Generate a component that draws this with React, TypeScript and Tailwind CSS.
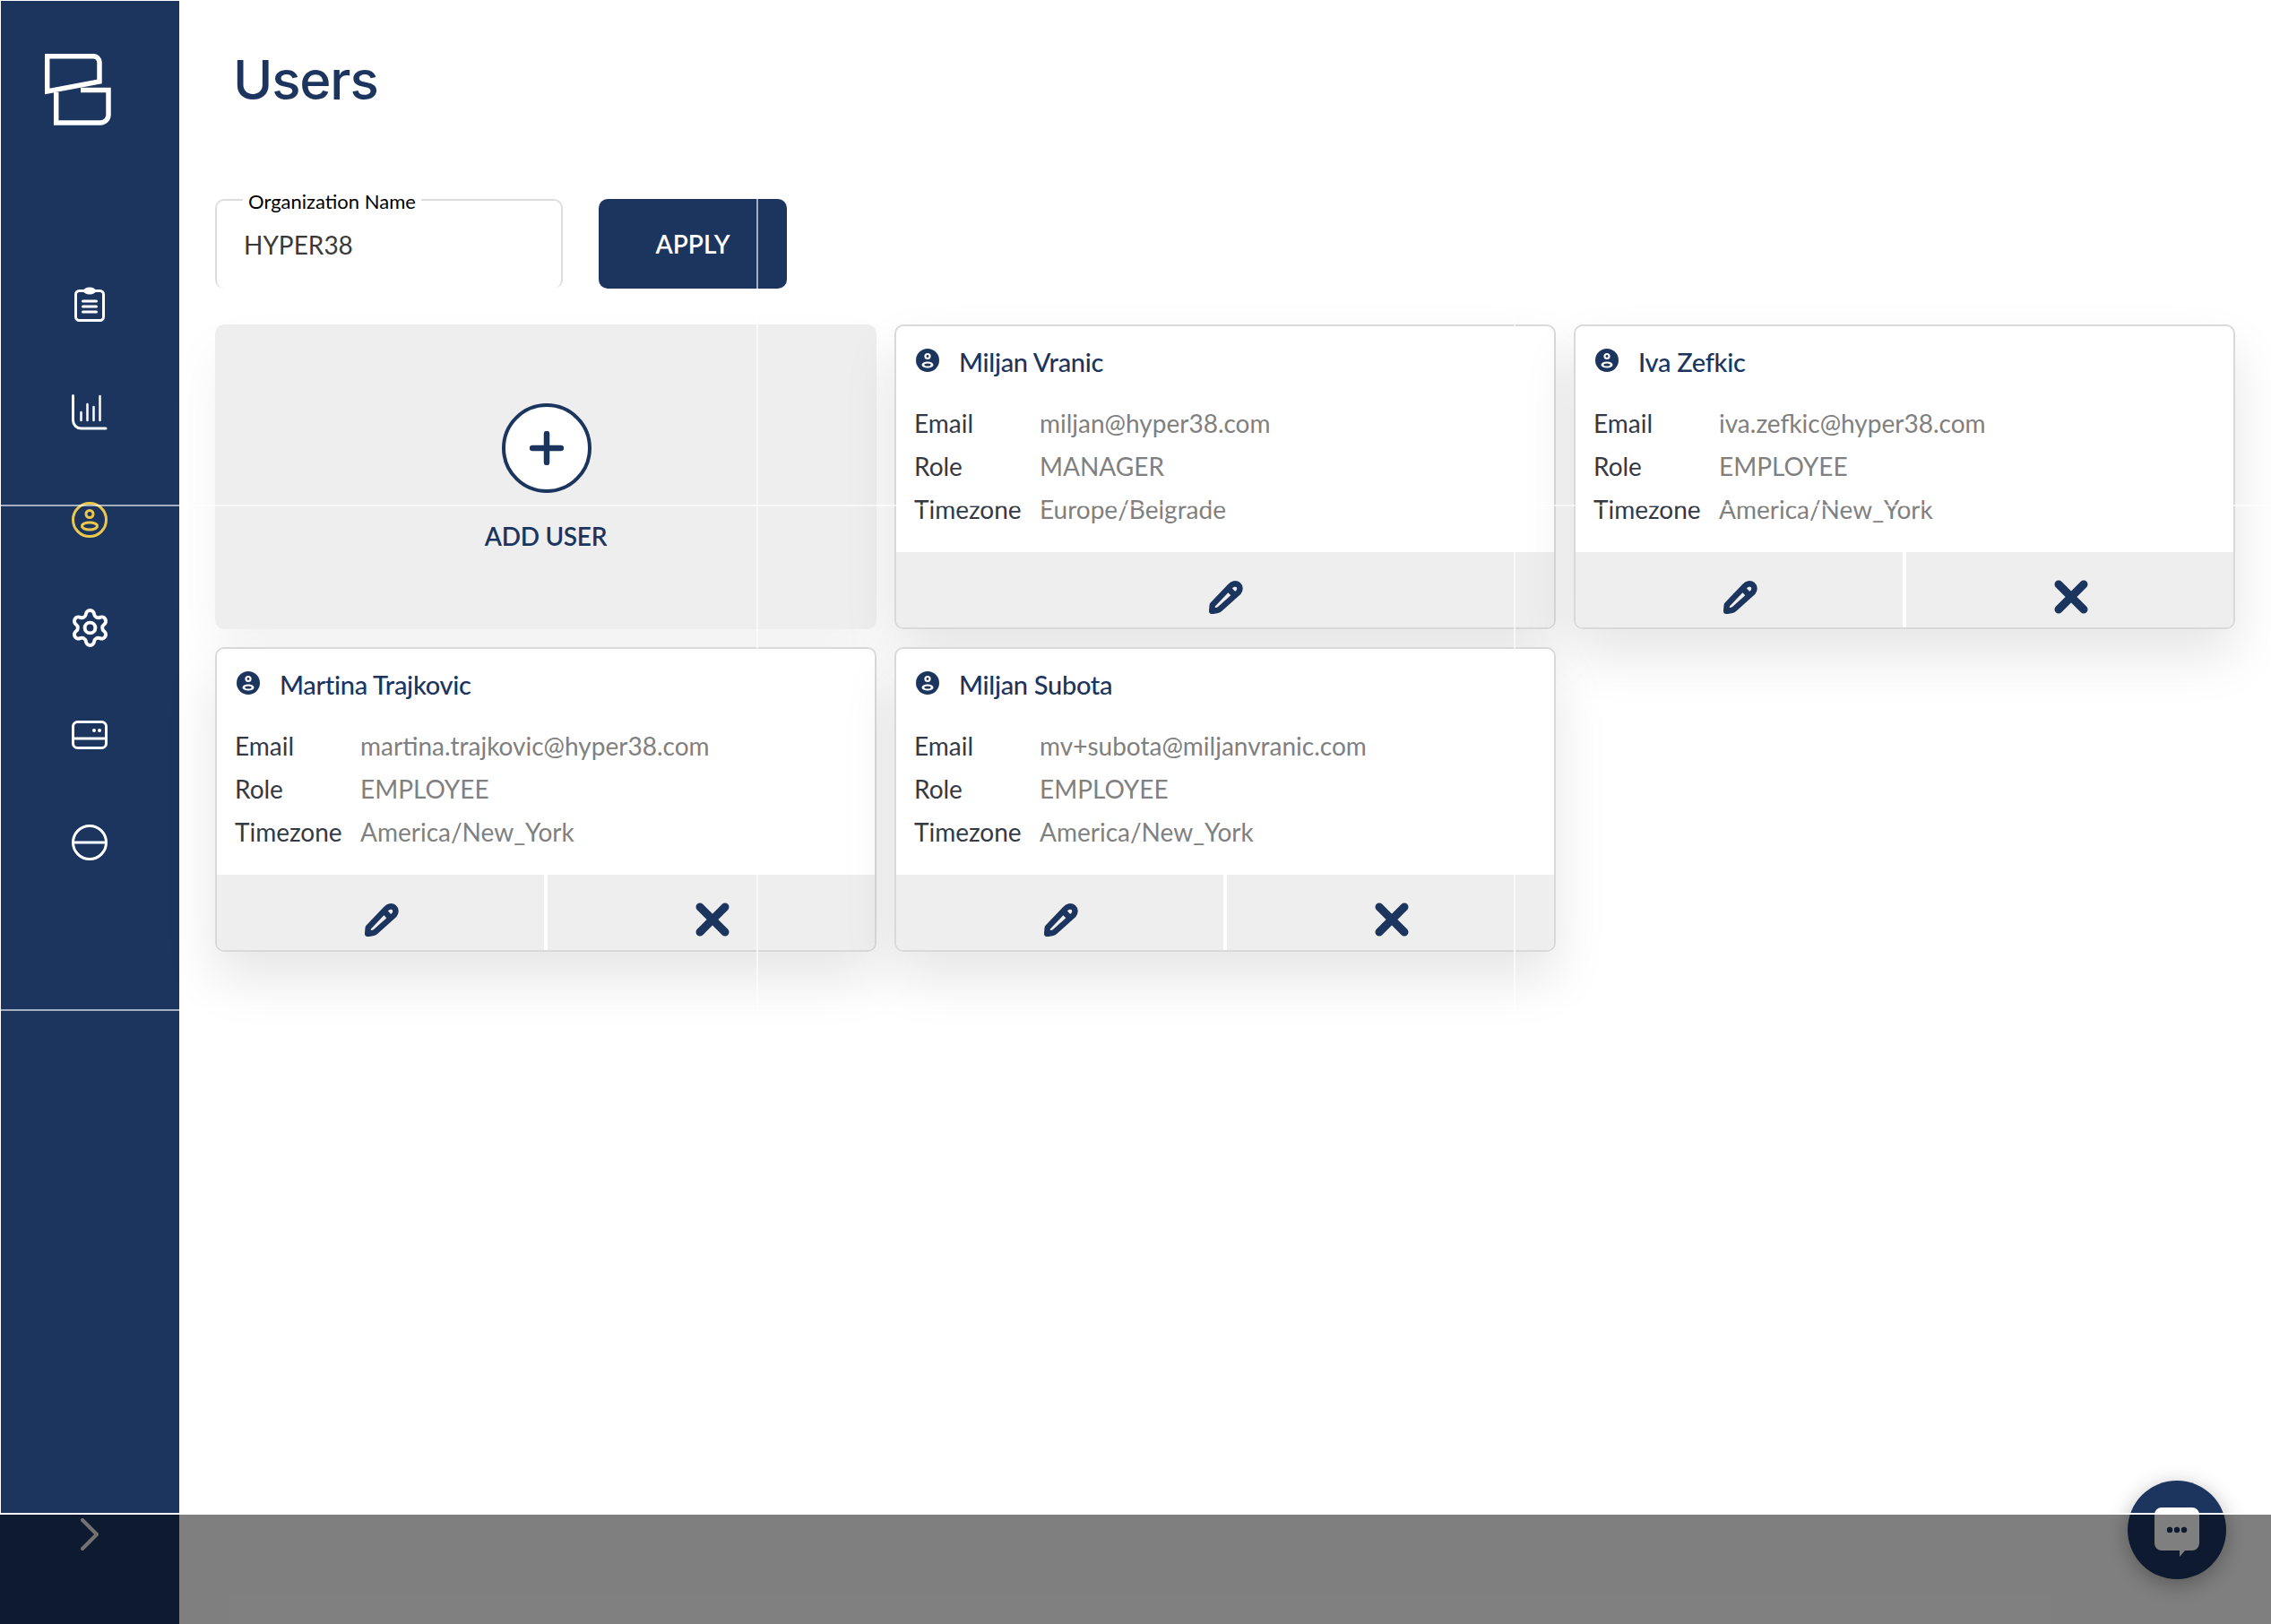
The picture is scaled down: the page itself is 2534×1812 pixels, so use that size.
import { Settings } from "lucide-react";

type User = {
  name: string;
  email: string;
  role: string;
  timezone: string;
  canDelete: boolean;
};

const users: User[] = [
  { name: "Miljan Vranic", email: "miljan@hyper38.com", role: "MANAGER", timezone: "Europe/Belgrade", canDelete: false },
  { name: "Iva Zefkic", email: "iva.zefkic@hyper38.com", role: "EMPLOYEE", timezone: "America/New_York", canDelete: true },
  { name: "Martina Trajkovic", email: "martina.trajkovic@hyper38.com", role: "EMPLOYEE", timezone: "America/New_York", canDelete: true },
  { name: "Miljan Subota", email: "mv+subota@miljanvranic.com", role: "EMPLOYEE", timezone: "America/New_York", canDelete: true },
];

function Logo() {
  return (
    <svg width="74" height="80" viewBox="0 0 74 80" fill="none" stroke="white" strokeWidth="5.5">
      <path d="M2.7 2.7H54a7 7 0 0 1 7 7V31L2.7 42Z" />
      <path d="M12.7 43V77H62a9 9 0 0 0 9-9V40.5H40" />
    </svg>
  );
}

function ClipboardIcon() {
  return (
    <svg width="40" height="40" viewBox="0 0 40 40" fill="none" stroke="white" strokeWidth="3" strokeLinecap="round">
      <rect x="4.5" y="4.5" width="31" height="33" rx="4" />
      <ellipse cx="20" cy="4.5" rx="7" ry="4" fill="white" stroke="none" />
      <path d="M12.5 16h15M12.5 22h15M12.5 28h15" />
    </svg>
  );
}

function ChartIcon() {
  return (
    <svg width="40" height="40" viewBox="0 0 40 40" fill="none" stroke="white" strokeLinecap="round">
      <path d="M1.5 1.5V29a9 9 0 0 0 9 9H38" strokeWidth="3" />
      <path d="M10.5 20v9M17.5 11v18M24.5 14v15M31.5 2v27" strokeWidth="2.5" />
    </svg>
  );
}

function ProfileIcon() {
  return (
    <svg width="40" height="40" viewBox="0 0 40 40" fill="none" stroke="#eac84e" strokeWidth="3">
      <circle cx="20" cy="20" r="18.5" />
      <circle cx="20" cy="13.5" r="4" />
      <ellipse cx="20" cy="27" rx="8.5" ry="4" />
    </svg>
  );
}

function CardIcon() {
  return (
    <svg width="40" height="32" viewBox="0 0 40 32" fill="none" stroke="white" strokeWidth="3">
      <rect x="1.5" y="1.5" width="37" height="29" rx="5" />
      <path d="M1.5 20h37" />
      <circle cx="25" cy="11" r="2" fill="white" stroke="none" />
      <circle cx="31" cy="11" r="2" fill="white" stroke="none" />
    </svg>
  );
}

function SliceIcon() {
  return (
    <svg width="40" height="40" viewBox="0 0 40 40" fill="none" stroke="white" strokeWidth="3">
      <circle cx="20" cy="20" r="18.5" />
      <path d="M1.5 20h37" />
    </svg>
  );
}

function PersonBadge() {
  return (
    <svg width="26" height="26" viewBox="0 0 26 26">
      <circle cx="13" cy="13" r="13" fill="#1c355e" />
      <circle cx="13" cy="8.5" r="3.6" fill="white" />
      <circle cx="13" cy="8.5" r="1.4" fill="#1c355e" />
      <ellipse cx="13" cy="18" rx="6.5" ry="3.6" fill="white" />
      <ellipse cx="13" cy="18" rx="3.6" ry="1.5" fill="#1c355e" />
    </svg>
  );
}

function PencilIcon() {
  return (
    <svg width="38" height="38" viewBox="0 0 38 38" fill="none" stroke="#1c355e" strokeWidth="6.5" strokeLinejoin="round">
      <path d="M3.2 34.8 3.8 28 23.8 7C26 4.4 30 3.4 32.6 5.6c2.8 2.4 2.2 6.2 0 8.6L12 32.6c-2.2 1.8-4.8 2.2-8.8 2.2Z" />
      <path d="M21.5 9.5 28.5 17" />
    </svg>
  );
}

function CrossIcon() {
  return (
    <svg width="38" height="38" viewBox="0 0 38 38" fill="none" stroke="#1c355e" strokeWidth="9" strokeLinecap="round">
      <path d="M5 5 33 33M33 5 5 33" />
    </svg>
  );
}

function UserCard({ user }: { user: User }) {
  return (
    <div className="flex flex-col rounded-[10px] border-2 border-[#d9d9d9] bg-white shadow-[0_30px_60px_rgba(0,0,0,0.1)] overflow-hidden">
      <div className="flex-1 pl-[20px] pt-[24px]">
        <div className="flex items-center h-[28px]">
          <span className="ml-[2px] mr-[22px] flex"><PersonBadge /></span>
          <span className="mt-[3px] text-[29px] leading-none font-medium text-[#1c355e] tracking-[-0.3px]">{user.name}</span>
        </div>
        <dl className="mt-[32px] grid grid-cols-[140px_1fr] auto-rows-[48px] items-center text-[28px] leading-none">
          <dt className="text-[#333a45]">Email</dt>
          <dd className="text-[#808080]">{user.email}</dd>
          <dt className="text-[#333a45]">Role</dt>
          <dd className="text-[#808080]">{user.role}</dd>
          <dt className="text-[#333a45]">Timezone</dt>
          <dd className="text-[#808080]">{user.timezone}</dd>
        </dl>
      </div>
      <div className="flex h-[84px] bg-[#eeeeee]">
        <button type="button" className="flex-1 flex items-center justify-center pt-[16px] pl-[2px]">
          <PencilIcon />
        </button>
        {user.canDelete && (
          <button type="button" className="flex-1 flex items-center justify-center pt-[16px] pl-[2px] border-l-[4px] border-white">
            <CrossIcon />
          </button>
        )}
      </div>
    </div>
  );
}

export default function App() {
  return (
    <div className="relative flex w-[2534px] h-[1812px] overflow-hidden bg-white font-['Lato','Liberation_Sans',sans-serif]">
      <aside className="flex flex-col w-[200px] shrink-0 bg-[#1c355e]">
        <div className="h-[1688px] border-l border-t border-white">
          <div className="pl-[49px] pt-[59px]">
            <Logo />
          </div>
          <nav className="mt-[140px] flex flex-col">
            <div className="h-[120px] flex items-center justify-center pr-px"><ClipboardIcon /></div>
            <div className="h-[120px] flex items-center justify-center pr-px"><ChartIcon /></div>
            <div className="h-[120px] flex items-center justify-center pr-px"><ProfileIcon /></div>
            <div className="h-[120px] flex items-center justify-center pr-px"><Settings size={47} color="white" strokeWidth={2} /></div>
            <div className="h-[120px] flex items-center justify-center pr-px"><CardIcon /></div>
            <div className="h-[120px] flex items-center justify-center pr-px"><SliceIcon /></div>
          </nav>
        </div>
        <div className="pt-[6px] pl-[90px]">
          <svg width="20" height="36" viewBox="0 0 20 36" fill="none" stroke="#e6e6e6" strokeWidth="4" strokeLinecap="round" strokeLinejoin="round">
            <path d="M2 2 18 18 2 34" />
          </svg>
        </div>
      </aside>

      <main className="flex-1 pl-[40px] pt-[56px]">
        <h1 className="pl-[20px] font-['Inter',sans-serif] text-[60px] leading-[66px] font-[550] tracking-[-1.2px] text-[#1c355e]">Users</h1>

        <div className="mt-[100px] flex gap-[40px]">
          <div className="relative w-[388px] h-[100px] rounded-[10px] border-x-2 border-t-2 border-[#dddddd] pl-[30px] flex items-center">
            <span className="absolute left-[29px] top-[-13px] bg-white px-[6px] text-[22px] leading-[28px] text-black">Organization Name</span>
            <span className="text-[28px] text-[#3a3a3a]">HYPER38</span>
          </div>
          <button type="button" className="w-[210px] h-[100px] rounded-[10px] bg-[#1c355e] text-[28px] font-semibold text-white">
            APPLY
          </button>
        </div>

        <div className="mt-[40px] grid w-[2254px] grid-cols-3 auto-rows-[340px] gap-x-[20px] gap-y-[20px]">
          <div className="flex flex-col items-center rounded-[10px] bg-[#eeeeee] pt-[88px] shadow-[0_30px_60px_rgba(0,0,0,0.05)]">
            <div className="ml-[2px] flex items-center justify-center w-[100px] h-[100px] rounded-full border-4 border-[#1c355e] bg-white">
              <svg width="38" height="38" viewBox="0 0 38 38" fill="none" stroke="#1c355e" strokeWidth="6.5" strokeLinecap="round">
                <path d="M19 3v32M3 19h32" />
              </svg>
            </div>
            <span className="mt-[30px] text-[28px] leading-[36px] font-semibold tracking-[-0.3px] text-[#1c355e]">ADD USER</span>
          </div>
          {users.map((user) => (
            <UserCard key={user.name} user={user} />
          ))}
        </div>
      </main>

      {/* seams left over in the captured page */}
      <div className="absolute left-0 right-0 top-[563px] h-[2px] bg-white/60" />
      <div className="absolute left-0 right-0 top-[1126px] h-[2px] bg-white/60" />
      <div className="absolute left-[844px] top-0 h-[1126px] w-[2px] bg-white/60" />
      <div className="absolute left-[1689px] top-0 h-[1126px] w-[2px] bg-white/60" />

      <button type="button" className="absolute left-[2374px] top-[1652px] flex items-center justify-center w-[110px] h-[110px] rounded-full bg-[#1c355e] pt-[6px] shadow-[0_6px_24px_rgba(0,0,0,0.3)]">
        <svg width="50" height="56" viewBox="0 0 50 56">
          <path d="M8 0h34a8 8 0 0 1 8 8v32a8 8 0 0 1-8 8H34l-6 7v-7H8a8 8 0 0 1-8-8V8a8 8 0 0 1 8-8Z" fill="white" />
          <circle cx="17" cy="25" r="3.2" fill="#1c355e" />
          <circle cx="25" cy="25" r="3.2" fill="#1c355e" />
          <circle cx="33" cy="25" r="3.2" fill="#1c355e" />
        </svg>
      </button>

      <div className="absolute left-0 right-0 top-[1690px] h-[122px] bg-black/50" />
      <div className="absolute left-0 right-0 top-[1688px] h-[2px] bg-white" />
    </div>
  );
}
